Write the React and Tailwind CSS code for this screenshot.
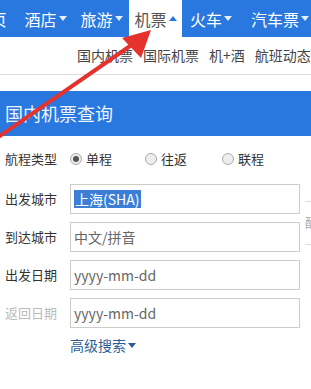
import { useState } from "react";

const navItems = [
  { label: "页", w: "w-[37px]", caret: false },
  { label: "酒店", w: "w-[57px]", caret: "down" },
  { label: "旅游", w: "w-[55px]", caret: "down" },
  { label: "机票", w: "w-[53px]", caret: "up", active: true },
  { label: "火车", w: "w-[58px]", caret: "down" },
  { label: "汽车票", w: "w-[80px]", caret: "down" },
];

const subNav = ["国内机票", "国际机票", "机+酒", "航班动态"];

const Caret = ({ dir, color }) => (
  <svg width="8" height="5" viewBox="0 0 8 5" className="ml-[2px]">
    {dir === "up" ? (
      <path d="M0 5 L4 0 L8 5 Z" fill={color} />
    ) : (
      <path d="M0 0 L8 0 L4 5 Z" fill={color} />
    )}
  </svg>
);

const Field = ({ label, value, dim, selected }) => (
  <div className="flex items-center h-[30px]">
    <span
      className={`w-[70px] pl-[5px] text-[13px] ${dim ? "text-[#bbb]" : "text-[#333]"}`}
    >
      {label}
    </span>
    <div className="w-[230px] h-[30px] border border-[#ccc] flex items-center pl-[3px]">
      {selected ? (
        <span className="bg-[#3a7fd5] text-white text-[14px] leading-[18px] px-[1px]">
          {value}
        </span>
      ) : (
        <span className="text-[14px] text-[#666]">{value}</span>
      )}
    </div>
  </div>
);

const App = () => {
  const [trip, setTrip] = useState("单程");
  const trips = [
    { v: "单程", w: "w-[75px]" },
    { v: "往返", w: "w-[77px]" },
    { v: "联程", w: "w-[60px]" },
  ];

  return (
    <div
      className="relative w-[311px] h-[389px] overflow-hidden bg-white"
      style={{ fontFamily: '"Noto Sans CJK SC", "Noto Sans", sans-serif' }}
    >
      {/* top nav */}
      <div className="flex h-[37px] bg-[#2878e0] ml-[-20px]">
        {navItems.map((item) => (
          <div
            key={item.label}
            className={`${item.w} shrink-0 flex items-center justify-center text-[16px] ${
              item.active ? "bg-white text-[#555]" : "text-white"
            }`}
          >
            {item.label}
            {item.caret && (
              <Caret dir={item.caret} color={item.active ? "#2878e0" : "#e6eefa"} />
            )}
          </div>
        ))}
      </div>

      {/* sub nav */}
      <div className="flex items-center h-[38px] pl-[77px] gap-[10px] border-b border-[#ddd] text-[14px] text-[#444] whitespace-nowrap">
        {subNav.map((s) => (
          <span key={s}>{s}</span>
        ))}
      </div>

      {/* panel */}
      <div className="mt-[16px]">
        <div className="h-[45px] bg-[#2878e0] flex items-center pl-[5px] text-[18px] text-[#eef4ff]">
          国内机票查询
        </div>

        <div className="flex items-center h-[26px] mt-[10px] text-[13px] text-[#333]">
          <span className="w-[70px] pl-[5px]">航程类型</span>
          {trips.map((t) => (
            <label key={t.v} className={`${t.w} flex items-center cursor-pointer`}>
              <span
                onClick={() => setTrip(t.v)}
                className="w-[12px] h-[12px] rounded-full border border-[#aaa] bg-[#eee] flex items-center justify-center mr-[4px]"
              >
                {trip === t.v && (
                  <span className="w-[6px] h-[6px] rounded-full bg-[#555]" />
                )}
              </span>
              {t.v}
            </label>
          ))}
        </div>

        <div className="flex mt-[12px]">
          <div className="flex flex-col gap-[8px]">
            <Field label="出发城市" value="上海(SHA)" selected />
            <Field label="到达城市" value="中文/拼音" />
            <Field label="出发日期" value="yyyy-mm-dd" />
            <Field label="返回日期" value="yyyy-mm-dd" dim />
          </div>
          <div className="ml-[5px] mt-[17px] h-[44px] w-[10px] border-t border-b border-[#ddd] flex items-center overflow-hidden text-[12px] text-[#aaa]">
            配
          </div>
        </div>

        <div className="flex items-center ml-[70px] mt-[7px] text-[14px] text-[#2a5d94]">
          高级搜索
          <Caret dir="down" color="#2a5d94" />
        </div>
      </div>

      {/* annotation arrow */}
      <svg
        className="absolute left-0 top-0 pointer-events-none"
        width="311"
        height="389"
        viewBox="0 0 311 389"
      >
        <line x1="-6" y1="140" x2="133" y2="44" stroke="#e5322d" strokeWidth="4" strokeLinecap="round" />
        <path d="M151 30 L122 38 L141 58 Z" fill="#e5322d" />
      </svg>
    </div>
  );
};

export default App;
